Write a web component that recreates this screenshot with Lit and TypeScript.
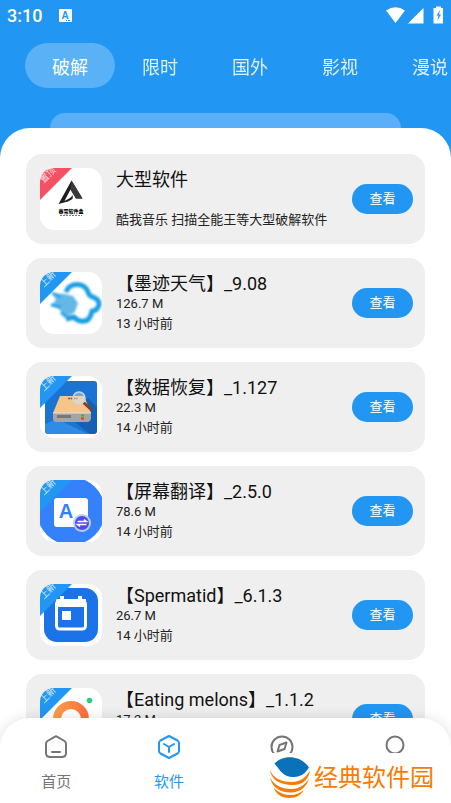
import { LitElement, html, css, svg, nothing } from "lit";
import { customElement, property, state } from "lit/decorators.js";
import { classMap } from "lit/directives/class-map.js";

interface AppItem {
  title: string;
  lines: string[];
  badge: string;
  pinned?: boolean;
  art: string;
}

const TABS = ["破解", "限时", "国外", "影视", "漫说"];

const ITEMS: AppItem[] = [
  { title: "大型软件", lines: ["酷我音乐 扫描全能王等大型破解软件"], badge: "置顶", pinned: true, art: "peak" },
  { title: "【墨迹天气】_9.08", lines: ["126.7 M", "13 小时前"], badge: "上新", art: "cloud" },
  { title: "【数据恢复】_1.127", lines: ["22.3 M", "14 小时前"], badge: "上新", art: "disk" },
  { title: "【屏幕翻译】_2.5.0", lines: ["78.6 M", "14 小时前"], badge: "上新", art: "translate" },
  { title: "【Spermatid】_6.1.3", lines: ["26.7 M", "14 小时前"], badge: "上新", art: "calendar" },
  { title: "【Eating melons】_1.1.2", lines: ["17.2 M", "14 小时前"], badge: "上新", art: "ring" },
];

const ART: Record<string, unknown> = {
  peak: svg`
    <path d="M31.500 12.500 L42.500 30.500 H36 L30.500 21.500 L24.500 33 L30 30 L33 27 L32.500 31 L28 33.500 L18.500 36 Z" fill="#1f1f1f"/>
    <path d="M31.500 12.500 L42.500 30.500 H36 L30.500 21.500 Z" fill="#3b3836"/>
    <text x="31" y="45" text-anchor="middle" class="tiny">暮雪软件盒</text>
    <path d="M20 47.500h22" stroke="#777" stroke-width="1" stroke-dasharray="2 1"/>`,
  cloud: svg`
    <defs><filter id="soft" x="-20%" y="-20%" width="140%" height="140%"><feGaussianBlur stdDeviation="1.200"/></filter></defs>
    <g filter="url(#soft)">
      <path d="M12 21 L25 22 L33 24 L38 31 L35 40 L26 45 L20 38 L11 33 L16 28 Z" fill="#62b9e8"/>
      <path d="M26 20 C29 10 45 10 48 20 Q49 24 53 25 Q60 28 59 33 Q57 39 52 39 Q50 49 44 49 Q38 50 34 45 L26 47" fill="none" stroke="#1f9fe3" stroke-width="5" stroke-linejoin="round"/>
      <path d="M12 21l9 4M11 33l10 2M21 40l5 5" stroke="#2ba3e5" stroke-width="3"/>
    </g>`,
  disk: svg`
    <rect x="5" y="5" width="52" height="53" rx="3" fill="#1b74d2"/>
    <path d="M5 48 L17 43 L48 58 H9 Q5 58 5 54Z" fill="#2f8be6"/>
    <path d="M48 22 L57 31 V54 Q57 58 53 58 H50 L31 43 Z" fill="#1560b4"/>
    <path d="M20 20 H44 L51 37 H13 Z" fill="#f7c48a"/>
    <path d="M13 37 H51 V43 Q50 46 48 46 H16 Q13 46 13 42Z" fill="#a5a5a5"/>
    <path d="M13 37H51" stroke="#e8e1d6" stroke-width="1"/>
    <path d="M17 40.500h14" stroke="#777" stroke-width="3"/>
    <path d="M41 39.500h3" stroke="#3fae49" stroke-width="2"/><path d="M41 42.500h3" stroke="#e33" stroke-width="2"/>
    <path d="M28 22.500h10" stroke="#6b6256" stroke-width="1.500" stroke-dasharray="2 .5"/>
    <path d="M44 27 L50.500 33" stroke="#8d3d25" stroke-width="3" stroke-linecap="round"/>
    <circle cx="39" cy="22" r="6" fill="#d7e9f5" fill-opacity=".45" stroke="#c3d9e8" stroke-width="1.500"/>`,
  translate: svg`
    <circle cx="31" cy="31" r="34" fill="#3581fb"/>
    <rect x="14" y="18" width="34" height="29" rx="3" fill="#fff"/>
    <text x="26" y="38" text-anchor="middle" class="letter">A</text>
    <circle cx="42" cy="43" r="9" fill="#b9cdfb"/>
    <circle cx="42" cy="43" r="7" fill="#5149e8"/>
    <path d="M37.500 41.500h9l-2.500-2M46.500 44.500h-9l2.500 2" fill="none" stroke="#fff" stroke-width="1.500"/>`,
  calendar: svg`
    <rect x="4" y="4" width="54" height="54" rx="13" fill="#1a73e8"/>
    <path d="M22 12v6M40 12v6" stroke="#fff" stroke-width="4"/>
    <rect x="16.500" y="17" width="29" height="28" rx="3" fill="#1a73e8" stroke="#fff" stroke-width="3"/>
    <path d="M16 15h30v8H16z" fill="#fff"/>
    <rect x="22" y="27" width="9" height="9" fill="#fff"/>`,
  ring: svg`
    <defs><linearGradient id="warm" x1="0" x2="1"><stop offset="0" stop-color="#fb9b4c"/><stop offset="1" stop-color="#f8733c"/></linearGradient></defs>
    <circle cx="31" cy="31" r="14" fill="none" stroke="url(#warm)" stroke-width="8"/>
    <circle cx="49.500" cy="12.500" r="2.700" fill="#1fd07c"/>`,
};

const NAV = [
  {
    id: "home", label: "首页", shown: true,
    icon: svg`<path d="M13 2.200 L4.500 7 Q3 8 3 10 V19 Q3 23 7 23 H19 Q23 23 23 19 V10 Q23 8 21.500 7 Z"/><path d="M9 18h8"/>`,
  },
  {
    id: "apps", label: "软件", shown: true,
    icon: svg`<path d="M13 2 L21.500 6.500 Q23 7.500 23 9 V17 Q23 18.500 21.500 19.500 L13 24 L4.500 19.500 Q3 18.500 3 17 V9 Q3 7.500 4.500 6.500 Z"/><path d="M8 10 L13 13 L18 10 M13 13 V18"/>`,
  },
  {
    id: "discover", label: "发现", shown: false,
    icon: svg`<circle cx="13" cy="13" r="10.500"/><path d="M17.500 8.500 L15.500 15 L8.500 17.500 L10.500 11 Z"/>`,
  },
  {
    id: "mine", label: "我的", shown: false,
    icon: svg`<circle cx="13" cy="11" r="8.500"/>`,
  },
];

@customElement("app-card")
class AppCard extends LitElement {
  @property({ attribute: false }) item!: AppItem;

  static styles = css`
    :host { display: block; }
    .card {
      display: flex; align-items: center; gap: 14px; box-sizing: border-box;
      height: 90px; padding: 14px 12px 14px 14px; border-radius: 16px; background: #efefef;
    }
    .thumb { position: relative; flex: none; width: 62px; height: 62px; }
    .art { display: block; width: 62px; height: 62px; border-radius: 14px; background: #fff; overflow: hidden; }
    .tiny { font: 900 5px "Noto Sans CJK SC", sans-serif; fill: #111; }
    .letter { font: 700 20px "Liberation Sans", sans-serif; fill: #3581fb; }
    .ribbon { fill: #2196f3; }
    .ribbon.pinned { fill: #f45264; }
    .mark {
      position: absolute; left: -4px; top: 0; width: 24px; height: 14px; line-height: 14px;
      text-align: center; transform: rotate(-45deg); font-size: 9px; color: rgba(255, 255, 255, .8);
    }
    .body { flex: 1; min-width: 0; height: 60px; display: flex; flex-direction: column; white-space: nowrap; }
    .title { margin: 0; font-size: 18px; font-weight: 400; line-height: 22px; color: #111; }
    .line { margin: 0; font-size: 13px; line-height: 18px; color: #222; }
    .line:last-child { margin-top: auto; }
    .view {
      flex: none; width: 61px; height: 30px; padding: 0; border: 0; border-radius: 15px;
      background: #2196f3; color: #fff; font: inherit; font-size: 13px; line-height: 30px;
    }
  `;

  render() {
    const { title, lines, badge, pinned, art } = this.item;
    return html`
      <article class="card">
        <div class="thumb">
          <svg class="art" viewBox="0 0 62 62">
            ${ART[art]}
            <path class=${classMap({ ribbon: true, pinned: !!pinned })} d="M0 0H32L0 32Z"/>
          </svg>
          <span class="mark">${badge}</span>
        </div>
        <div class="body">
          <h2 class="title">${title}</h2>
          ${lines.map((l) => html`<p class="line">${l}</p>`)}
        </div>
        <button class="view">查看</button>
      </article>
    `;
  }
}

@customElement("app-root")
class AppRoot extends LitElement {
  @state() private tab = 0;
  @state() private page = "apps";

  static styles = css`
    :host {
      display: flex; flex-direction: column; position: relative; height: 100vh; overflow: hidden;
      background: #2196f3; font-family: Roboto, "Noto Sans CJK SC", sans-serif;
    }
    button { cursor: pointer; }
    .status { flex: none; display: flex; align-items: center; height: 31px; padding: 0 7px; color: #fff; }
    .clock { font-size: 18px; font-weight: 500; line-height: 31px; }
    .note { width: 14px; height: 14px; margin-left: 16px; }
    .signals { margin-left: auto; width: 60px; height: 20px; }
    .badge-letter { font: 700 10px "Liberation Sans", sans-serif; fill: #2196f3; }
    .tabs { flex: none; display: flex; padding: 12px 25px 25px; overflow: hidden; }
    .tab {
      flex: none; width: 90px; height: 45px; padding: 0; border: 0; border-radius: 23px;
      background: none; color: #fff; opacity: .85; font: inherit; font-size: 18px;
    }
    .tab.on { background: rgba(255, 255, 255, .26); opacity: 1; }
    .search {
      flex: none; box-sizing: border-box; height: 45px; margin: 0 50px; padding: 0 16px; border: 0;
      border-radius: 15px; background: #5aaff8; color: #fff; font: inherit; font-size: 13px;
    }
    .sheet {
      flex: 1; min-height: 0; position: relative; box-sizing: border-box; margin-top: -30px; padding: 26px 26px 0;
      border-radius: 30px 30px 0 0; background: #fff; overflow: hidden;
      display: flex; flex-direction: column; gap: 14px;
    }
    .nav {
      position: absolute; left: 0; right: 0; bottom: 0; height: 85px; display: flex;
      border-radius: 30px 30px 0 0; background: #fff; box-shadow: 0 0 14px rgba(0, 0, 0, .12);
    }
    .item {
      flex: 1; display: flex; flex-direction: column; align-items: center; gap: 12px; padding: 16px 0 0;
      border: 0; background: none; color: #757575; font: inherit; font-size: 15px; line-height: 20px;
    }
    .item.on { color: #2196f3; }
    .icon { width: 26px; height: 26px; fill: none; stroke: currentColor; stroke-width: 2; stroke-linecap: round; stroke-linejoin: round; }
    .brand {
      position: absolute; right: 0; bottom: 0; height: 50px; box-sizing: border-box; padding: 0 17px 0 4px;
      display: flex; align-items: center; gap: 4px; background: #fff;
      color: #f57c00; font-size: 24px; font-weight: 400; line-height: 50px; white-space: nowrap;
    }
    .logo { width: 42px; height: 46px; }
  `;

  render() {
    return html`
      <div class="status">
        <span class="clock">3:10</span>
        <svg class="note" viewBox="0 0 14 14">
          <rect x="1" y="0" width="13" height="13" rx="1" fill="#fff"/>
          <text class="badge-letter" x="7" y="10" text-anchor="middle">A</text>
          <path d="M8 11.500h1M10 11.500h2" stroke="#2196f3"/>
        </svg>
        <svg class="signals" viewBox="0 0 60 20">
          <path d="M2 4.500Q11.500-2 21 4.500L11.500 17Z" fill="#fff"/>
          <path d="M24 17.500L39.500 2V17.500Z" fill="#fff"/>
          <path d="M50 2h2V.500h5V2h2V17.500h-9.500V2Z" fill="#fff"/>
          <path d="M56 4l-3.500 5.500h2l-1 5 3.500-6h-2z" fill="#2196f3"/>
        </svg>
      </div>
      <nav class="tabs">
        ${TABS.map((t, i) => html`<button class=${classMap({ tab: true, on: i === this.tab })} @click=${() => (this.tab = i)}>${t}</button>`)}
      </nav>
      <input class="search" type="search" aria-label="搜索">
      <main class="sheet">${ITEMS.map((item) => html`<app-card .item=${item}></app-card>`)}</main>
      <nav class="nav">
        ${NAV.map((n) => html`
          <button class=${classMap({ item: true, on: n.id === this.page })} aria-label=${n.label} @click=${() => (this.page = n.id)}>
            <svg class="icon" viewBox="0 0 26 26">${n.icon}</svg>
            ${n.shown ? html`<span>${n.label}</span>` : nothing}
          </button>`)}
      </nav>
      <div class="brand">
        <svg class="logo" viewBox="0 0 42 46">
          <path d="M6.500 8.500C14 0 32-1 41 12.500C39 15 36 22 25 22C15 22 12 15 6.500 8.500Z" fill="#0b72b9"/>
          <path d="M2 14.500C5 24 14 27 24 27C33 27 38 22 42 15.500C41 24 35 30 25 30C12 30 3 25 2 14.500Z" fill="#f57c00"/>
          <path d="M2 22.500C6 30 13 34 23 34C32 34 38 29 41 23C39 31 33 37.500 23 37.500C11 37.500 4 32 2 22.500Z" fill="#f57c00"/>
          <path d="M5.500 32.500C11 38 16 40 22 40C28 40 32 38 36 35C33 40 28 43 21 43C14 43 8 39 5.500 32.500Z" fill="#f57c00"/>
        </svg>
        <span>经典软件园</span>
      </div>
    `;
  }
}
